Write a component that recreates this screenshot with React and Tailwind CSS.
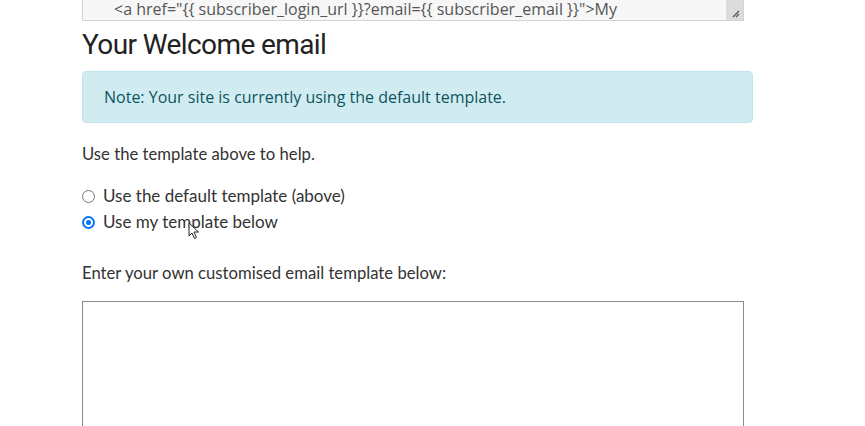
export default function App() {
  return (
    <div className="relative w-[865px] h-[426px] overflow-hidden bg-white" style={{ fontFamily: "Lato, sans-serif" }}>
      <div className="ml-[82px] w-[671px]">
        <div className="w-[662px] h-[21px] bg-[#f7f7f7] border border-[#d4d4d4] border-t-0 flex">
          <div className="flex-1 pl-[31px] pt-[1px] text-[16px] leading-[17px] text-[#555] whitespace-nowrap" style={{ fontFamily: "'Open Sans', sans-serif" }}>
            {'<a href="{{ subscriber_login_url }}?email={{ subscriber_email }}">My'}
          </div>
          <div className="w-[17px] h-full bg-[#dcdcdc] flex items-end justify-end">
            <svg width="10" height="10" viewBox="0 0 10 10" className="mb-[2px] mr-[3px]">
              <path d="M9 3L3 9M9 6L6 9" stroke="#555" strokeWidth="1.2" />
            </svg>
          </div>
        </div>
        <h2 className="mt-[8px] text-[28px] leading-[32px] text-[#222] tracking-[-0.6px]" style={{ fontFamily: "Roboto, sans-serif" }}>
          Your Welcome email
        </h2>
        <div className="mt-[10px] h-[52px] rounded-[4px] bg-[#d1ecf1] border border-[#bee5eb] flex items-center pl-[21px] text-[16px] text-[#0c5460]" style={{ fontFamily: "'Open Sans', sans-serif" }}>
          Note: Your site is currently using the default template.
        </div>
        <p className="mt-[20px] text-[16.7px] leading-[22px] text-[#333]">Use the template above to help.</p>
        <div className="mt-[20px] flex flex-col gap-[4px] text-[17px] text-[#333]">
          <label className="flex items-center gap-[8px] h-[22px]">
            <span className="w-[13px] h-[13px] rounded-full border border-[#767676] bg-white" />
            <span>Use the default template (above)</span>
          </label>
          <label className="flex items-center gap-[8px] h-[22px]">
            <span className="w-[13px] h-[13px] rounded-full bg-[#0075ff] flex items-center justify-center">
              <span className="w-[9px] h-[9px] rounded-full border-[2px] border-white bg-[#0075ff]" />
            </span>
            <span>Use my template below</span>
          </label>
        </div>
        <p className="mt-[29px] text-[16.7px] leading-[22px] text-[#333]">Enter your own customised email template below:</p>
        <div className="mt-[17px] w-[662px] h-[140px] border border-[#8a8a8a] border-b-0" />
      </div>
      <svg className="absolute left-[188px] top-[222px]" width="12" height="18" viewBox="0 0 12 18">
        <path d="M1 1L1 14L4 11L6.5 16.5L8.5 15.5L6 10L10.5 10Z" fill="#fff" stroke="#222" strokeWidth="1" strokeLinejoin="round" />
      </svg>
    </div>
  );
}
